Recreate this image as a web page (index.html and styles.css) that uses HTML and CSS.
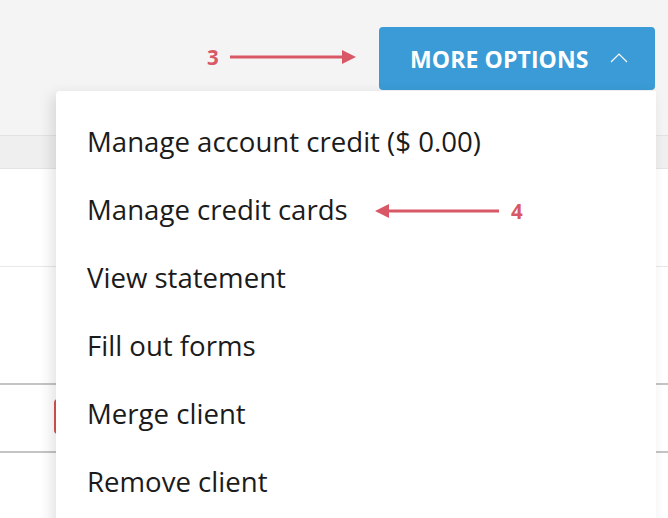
FILE: index.html
```html
<html>
    <head>
        <link rel="stylesheet" href="styles.css">
    </head>
    <body>
        <div id="topbar">
            <div class="toolbar">
                <button class="moreBtn">
                    <span>MORE OPTIONS</span>
                    <svg class="chev" width="18" height="10" viewBox="0 0 18 10">
                        <polyline points="1,9 9,1 17,9" fill="none" stroke="#fff" stroke-width="1.2"/>
                    </svg>
                </button>
            </div>
        </div>

        <div id="table">
            <div class="row thead"></div>
            <div class="row r1"></div>
            <div class="row r2"></div>
            <div class="row r3">
                <span class="redBtn"></span>
            </div>
            <div class="row r4"></div>
        </div>

        <ul id="menu">
            <li>Manage account credit ($ 0.00)</li>
            <li>Manage credit cards</li>
            <li>View statement</li>
            <li>Fill out forms</li>
            <li>Merge client</li>
            <li>Remove client</li>
        </ul>

        <!-- annotation arrows -->
        <div class="note n3">
            <b>3</b>
            <svg width="126" height="14" viewBox="0 0 126 14">
                <line x1="0" y1="7" x2="114" y2="7" stroke="#d95866" stroke-width="3"/>
                <polygon points="112,0 126,7 112,14" fill="#d95866"/>
            </svg>
        </div>
        <div class="note n4">
            <svg width="124" height="14" viewBox="0 0 124 14">
                <line x1="12" y1="7" x2="124" y2="7" stroke="#d95866" stroke-width="3"/>
                <polygon points="14,0 0,7 14,14" fill="#d95866"/>
            </svg>
            <b>4</b>
        </div>
    </body>
</html>
```

FILE: styles.css
```css
*{
    font-family: "Open Sans", "Liberation Sans", sans-serif;
    box-sizing: border-box;
}
body{
    margin: 0px;
    background: #fff;
    overflow: hidden;
    position: relative;
    width: 668px;
    height: 518px;
}
#topbar{
    height: 136px;
    background: #f4f4f4;
    border-bottom: 1px solid #e2e2e2;
}
.toolbar{
    display: flex;
    justify-content: flex-end;
    padding: 27px 13px 0px 0px;
}
.moreBtn{
    width: 276px;
    height: 63px;
    border: none;
    border-radius: 4px;
    background: #3a9bd6;
    color: white;
    display: flex;
    align-items: center;
    padding: 0px 0px 0px 31px;
    font-size: 23px;
    font-weight: 700;
    letter-spacing: 0.1px;
}
.moreBtn .chev{
    margin-left: 21px;
    margin-top: -2px;
}
#table .row{
    border-bottom: 1px solid #e8e8e8;
    position: relative;
}
#table .thead{
    height: 33px;
    background: #efefef;
    border-bottom: 1px solid #e4e4e4;
}
#table .r1{
    height: 98px;
}
#table .r2{
    height: 118px;
    border-bottom: 2px solid #c4c4c4;
}
#table .r3{
    height: 68px;
    border-bottom: 2px solid #c4c4c4;
}
#table .r4{
    height: 70px;
}
.redBtn{
    position: absolute;
    left: 54px;
    top: 14px;
    width: 40px;
    height: 35px;
    border: 2px solid #d9534f;
    border-radius: 4px;
}
#menu{
    position: absolute;
    left: 56px;
    top: 91px;
    width: 600px;
    height: 440px;
    margin: 0px;
    padding: 16px 0px 0px 31px;
    list-style: none;
    background: white;
    border-radius: 4px 0px 0px 0px;
    box-shadow: -4px 4px 14px rgba(0,0,0,0.12);
}
#menu li{
    height: 68px;
    display: flex;
    align-items: center;
    font-size: 27.6px;
    color: #1b1b1b;
}
.note{
    position: absolute;
    display: flex;
    align-items: center;
    color: #d95866;
    font-size: 20.5px;
}
.note b{
    font-weight: 700;
}
.n3{
    left: 207px;
    top: 43px;
}
.n3 svg{
    margin-left: 11px;
}
.n4{
    left: 375px;
    top: 197px;
}
.n4 svg{
    margin-right: 12px;
}
```
